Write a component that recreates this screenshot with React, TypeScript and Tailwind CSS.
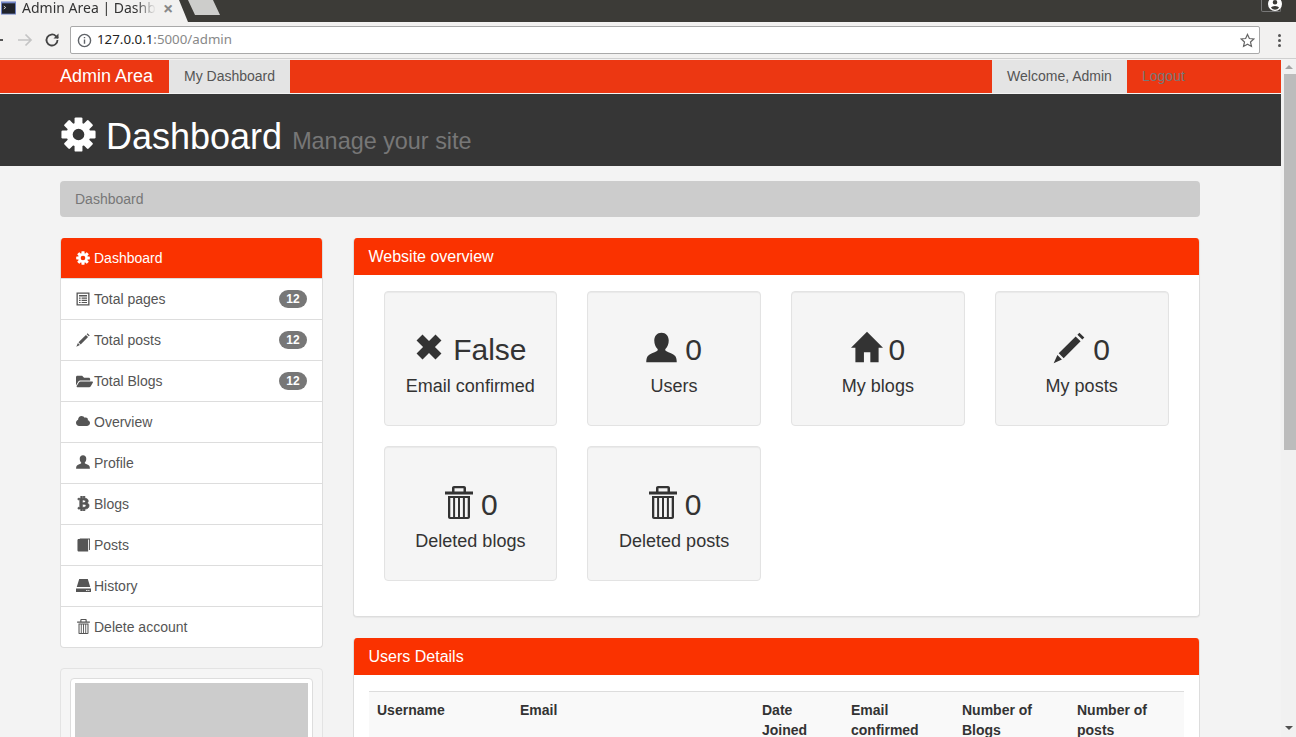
import React from 'react';
import { FaBtc, FaCloud, FaFolderOpen } from 'react-icons/fa';

type IconProps = { className?: string };

const CogIcon = ({ className }: IconProps) => (
  <svg viewBox="0 0 24 24" fill="currentColor" className={className}>
    {[0, 45, 90, 135, 180, 225, 270, 315].map(angle => (
      <rect key={angle} x="9.300" y="0.300" width="5.400" height="6" rx="0.800" transform={`rotate(${angle} 12 12)`} />
    ))}
    <path fillRule="evenodd" d="M12 3.800a8.200 8.200 0 1 1 0 16.400 8.200 8.200 0 0 1 0-16.400zm0 4.200a4 4 0 1 0 0 8 4 4 0 0 0 0-8z" />
  </svg>
);

const UserIcon = ({ className }: IconProps) => (
  <svg viewBox="0 0 24 24" fill="currentColor" className={className}>
    <path d="M12 .5c3.400 0 5.600 2.600 5.600 6 0 2.800-1 5-2.400 6.400-.5.500-.4 1.400.3 1.800 2.300 1.200 5.600 2.200 7.100 3.800.9 1 1.200 3 1.200 5H.2c0-2 .3-4 1.200-5 1.500-1.600 4.800-2.600 7.100-3.800.7-.4.8-1.300.3-1.800C7.400 11.500 6.400 9.300 6.400 6.500c0-3.400 2.200-6 5.600-6z" />
  </svg>
);

const CrossIcon = ({ className }: IconProps) => (
  <svg viewBox="0 0 24 24" fill="currentColor" className={className}>
    <path d="M6 .5 12 6.500 18 .5 23.500 6l-6 6 6 6-5.500 5.500-6-6-6 6L.5 18l6-6-6-6z" />
  </svg>
);

const HomeIcon = ({ className }: IconProps) => (
  <svg viewBox="0 0 24 24" fill="currentColor" className={className}>
    <path d="M12 .5 24 12.500h-3.300V23.500h-6.200v-7.500H9.700v7.500H3.300V12.500H0z" />
  </svg>
);

const PencilIcon = ({ className }: IconProps) => (
  <svg viewBox="0 0 24 24" fill="currentColor" className={className}>
    <path d="M19.800.5 23.500 4.200l-1.500 1.500-3.700-3.700zM17 3.300l3.700 3.700L8 19.700 4.300 16zM3.300 17.300l3.400 3.400-6.200 2.800z" />
  </svg>
);

const TrashIcon = ({ className }: IconProps) => (
  <svg viewBox="0 0 28 33" fill="currentColor" className={className}>
    <path fillRule="evenodd" d="M9 0h10c1.100 0 2 .9 2 2v3.500h7V8.500H0v-3h7V2c0-1.100.9-2 2-2zm.5 2.200v3.300h9V2.200z" />
    <path fillRule="evenodd" d="M3 10h22v21c0 1.100-.9 2-2 2H5c-1.100 0-2-.9-2-2zm2.300 2v19h2.800V12zm4.800 0v19h2.900V12zm4.900 0v19h2.900V12zm4.900 0v19h2.800V12z" />
  </svg>
);

const ListAltIcon = ({ className }: IconProps) => (
  <svg viewBox="0 0 14 14" fill="currentColor" className={className}>
    <path fillRule="evenodd" d="M.5.5h13v13H.5zm1.300 1.300v10.400h10.400V1.800zM3 3h8v1.400H3zm0 2.500h1.600v1.200H3zm2.600 0H11v1.200H5.600zM3 7.700h1.600v1.200H3zm2.600 0H11v1.200H5.600zM3 9.900h1.600v1.200H3zm2.600 0H11v1.200H5.600z" />
  </svg>
);

const BookIcon = ({ className }: IconProps) => (
  <svg viewBox="0 0 14 14" fill="currentColor" className={className}>
    <path d="M3 0h11v12.500h-1V1H3zM.5 1.800C.5 1 1.200.5 2 .5h10v13.500H2c-.8 0-1.500-.5-1.500-1.300z" />
  </svg>
);

const HddIcon = ({ className }: IconProps) => (
  <svg viewBox="0 0 14 14" fill="currentColor" className={className}>
    <path fillRule="evenodd" d="M3 1h8l2.300 7.500H.7zM0 9.800h14V13H0zm9.500 1.300v1h1.200v-1zm2 0v1h1v-1z" />
  </svg>
);

const InfoIcon = () => (
  <svg viewBox="0 0 16 16" className="h-[15px] w-[15px] text-[#5f6368]" fill="none" stroke="currentColor" strokeWidth="1.500">
    <circle cx="8" cy="8" r="6.500" />
    <path d="M8 7v4.500M8 4.200v1.500" />
  </svg>
);

const navItems: { label: string; icon: React.ReactNode; badge?: string }[] = [
  { label: 'Total pages', icon: <ListAltIcon className="h-[14px] w-[14px]" />, badge: '12' },
  { label: 'Total posts', icon: <PencilIcon className="h-[14px] w-[14px]" />, badge: '12' },
  { label: 'Total Blogs', icon: <FaFolderOpen className="h-[17px] w-[17px]" />, badge: '12' },
  { label: 'Overview', icon: <FaCloud className="mb-[3px] h-[14px] w-[14px]" /> },
  { label: 'Profile', icon: <UserIcon className="mb-[2px] h-[14px] w-[14px]" /> },
  { label: 'Blogs', icon: <FaBtc className="mb-[1px] h-[15px] w-[15px]" stroke="currentColor" strokeWidth={28} /> },
  { label: 'Posts', icon: <BookIcon className="mb-[1px] ml-[1px] h-[14px] w-[13px]" /> },
  { label: 'History', icon: <HddIcon className="mb-[1px] h-[15px] w-[15px]" /> },
  { label: 'Delete account', icon: <TrashIcon className="mb-[2px] ml-[1px] h-[15px] w-[13px]" /> },
];

const stats = [
  { icon: <CrossIcon className="mb-[5px] ml-[2px] h-[26px] w-[26px]" />, value: 'False', label: 'Email confirmed', gap: 'gap-[11px]' },
  { icon: <UserIcon className="mb-[4px] h-[31px] w-[31px]" />, value: '0', label: 'Users', gap: 'gap-[8px]' },
  { icon: <HomeIcon className="mb-[5px] h-[32px] w-[32px]" />, value: '0', label: 'My blogs', gap: 'gap-[6px]' },
  { icon: <PencilIcon className="mb-[4px] h-[32px] w-[32px]" />, value: '0', label: 'My posts', gap: 'gap-[8px]' },
  { icon: <TrashIcon className="mb-[4px] ml-[2px] h-[33px] w-[28px]" />, value: '0', label: 'Deleted blogs', gap: 'gap-[8px]' },
  { icon: <TrashIcon className="mb-[4px] ml-[2px] h-[33px] w-[28px]" />, value: '0', label: 'Deleted posts', gap: 'gap-[8px]' },
];

const BrowserChrome = () => (
  <div className="h-[60px] shrink-0 font-['Noto_Sans',sans-serif]">
    <div className="flex h-[22px] items-start bg-[#3c3b37]">
      <div className="flex h-[22px] w-[179px] shrink-0 items-center bg-[#f2f1f0] pb-[6px]">
        <svg viewBox="0 0 16 14" className="ml-[1px] h-[14px] w-[15px] shrink-0">
          <rect width="16" height="14" fill="#7387c9" />
          <rect x="1" y="2" width="14" height="11" fill="#20232b" />
          <path d="M3 5l2 1.500L3 8" stroke="#ddd" fill="none" />
        </svg>
        <span className="ml-[6px] w-[134px] shrink-0 overflow-hidden whitespace-nowrap text-[14px] leading-[16px] text-[#333] [mask-image:linear-gradient(to_right,black_85%,transparent)]">
          Admin Area | Dashboard
        </span>
        <span className="ml-[7px] text-[18px] font-bold leading-[16px] text-[#888]">×</span>
      </div>
      <svg viewBox="0 0 44 22" className="h-[22px] w-[44px] shrink-0">
        <path d="M0 0l9 22H0z" fill="#f2f1f0" />
        <path d="M9 0h25l7 15H16z" fill="#cdcdcb" />
      </svg>
      <div className="ml-auto mr-[15px] flex h-[12px] w-[20px] items-start justify-end rounded-b-[2px] border border-t-0 border-[#777]">
        <svg viewBox="0 0 14 14" className="-mr-[2px] -mt-[3px] h-[14px] w-[14px] text-white" fill="currentColor">
          <path fillRule="evenodd" d="M7 0a7 7 0 1 1 0 14A7 7 0 0 1 7 0zm0 3a2.300 2.300 0 1 0 0 4.600A2.300 2.300 0 0 0 7 3zm0 6c-2 0-3.500.8-4 1.800a5.200 5.200 0 0 0 8 0C10.500 9.800 9 9 7 9z" />
        </svg>
      </div>
    </div>
    <div className="flex h-[37px] items-center border-b border-[#cfcfcf] bg-[#f2f1f0]">
      <div className="flex w-[70px] items-center">
        <span className="h-[2px] w-[3px] bg-[#555]" />
        <svg viewBox="0 0 16 16" className="ml-[14px] h-[16px] w-[16px] text-[#c4c4c4]" fill="none" stroke="currentColor" strokeWidth="1.700">
          <path d="M1 8h13M8.500 2.500 14 8l-5.500 5.500" />
        </svg>
        <svg viewBox="0 0 16 16" className="ml-[11px] h-[16px] w-[16px] text-[#444]" fill="none" stroke="currentColor" strokeWidth="1.800">
          <path d="M13.500 8a5.500 5.500 0 1 1-1.600-3.900L14 6" />
          <path d="M14.500 1.500v5h-5z" fill="currentColor" stroke="none" />
        </svg>
      </div>
      <div className="flex h-[28px] w-[1190px] items-center rounded-[2px] border border-[#a9a9a9] bg-white pl-[6px] pr-[4px]">
        <InfoIcon />
        <span className="ml-[5px] text-[13.300px] text-[#222]">127.0.0.1<span className="text-[#888]">:5000/admin</span></span>
        <svg viewBox="0 0 16 16" className="ml-auto h-[15px] w-[15px] text-[#666]" fill="none" stroke="currentColor" strokeWidth="1.300">
          <path d="M8 1.500l2 4.400 4.700.5-3.500 3.200 1 4.700L8 11.900l-4.200 2.400 1-4.700L1.300 6.400 6 5.900z" />
        </svg>
      </div>
      <div className="ml-[18px] flex flex-col gap-[2px]">
        <span className="h-[3px] w-[3px] rounded-full bg-[#555]" />
        <span className="h-[3px] w-[3px] rounded-full bg-[#555]" />
        <span className="h-[3px] w-[3px] rounded-full bg-[#555]" />
      </div>
    </div>
  </div>
);

const Scrollbar = () => (
  <div className="flex w-[15px] shrink-0 flex-col items-end bg-[#f1f1f1]">
    <span className="mr-[3px] mt-[5px] h-0 w-0 border-x-[4px] border-b-[4px] border-x-transparent border-b-[#a3a3a3]" />
    <span className="mt-[5px] h-[376px] w-[12px] bg-[#bcbcbc]" />
    <span className="mr-[3px] mt-[276px] h-0 w-0 border-x-[4px] border-t-[4px] border-x-transparent border-t-[#505050]" />
  </div>
);

export default function App() {
  return (
    <div className="flex h-[737px] w-[1296px] flex-col overflow-hidden bg-[#f3f3f3]">
      <BrowserChrome />
      <div className="flex min-h-0 flex-1 font-['Liberation_Sans',sans-serif] text-[14px] leading-[20px] text-[#333]">
        <div className="w-[1281px] shrink-0">
          <nav className="flex h-[33px] items-stretch bg-[#ec3712] pl-[60px]">
            <span className="flex w-[109px] items-center pb-[2px] text-[18px] text-white">Admin Area</span>
            <span className="flex w-[121px] items-center justify-center bg-[#e4e4e4] pb-[2px] text-[#555]">My Dashboard</span>
            <span className="ml-auto flex w-[135px] items-center justify-center bg-[#e4e4e4] pb-[2px] text-[#555]">Welcome, Admin</span>
            <span className="flex w-[154px] items-center pb-[2px] pl-[15px] text-[#777]">Logout</span>
          </nav>
          <header className="mt-[1px] h-[72px] w-[1282px] bg-[#363636] pl-[60px] pt-[23px]">
            <h1 className="flex items-baseline text-[36px] leading-[40px] text-white">
              <CogIcon className="mb-[10px] ml-[1px] mr-[10px] h-[35px] w-[35px] self-center" />
              <span>Dashboard</span>
              <small className="ml-[10px] text-[23.400px] text-[#777]">Manage your site</small>
            </h1>
          </header>

          <div className="mx-[60px] mt-[15px] w-[1140px]">
            <div className="flex h-[36px] items-center rounded-[4px] bg-[#cccccc] px-[15px] text-[#777]">Dashboard</div>

            <div className="mt-[21px] flex items-start justify-between">
              <aside className="w-[263px] shrink-0">
                <div className="overflow-hidden rounded-[4px] border border-[#ddd] border-t-0 bg-white text-[#555]">
                  <div className="flex h-[41px] items-center border-b border-[#ddd] bg-[#fa3200] pl-[15px] text-white">
                    <span className="flex w-[18px]"><CogIcon className="mb-[1px] h-[14px] w-[14px]" /></span>
                    Dashboard
                  </div>
                  {navItems.map((item, i) => (
                    <div key={item.label} className={`flex items-center px-[15px] ${i < navItems.length - 1 ? 'h-[41px] border-b border-[#ddd]' : 'h-[40px]'}`}>
                      <span className="flex w-[18px] shrink-0 items-center">{item.icon}</span>
                      {item.label}
                      {item.badge && (
                        <span className="ml-auto flex h-[18px] w-[28px] items-center justify-center rounded-[10px] bg-[#777] text-[12px] font-bold leading-none text-white">{item.badge}</span>
                      )}
                    </div>
                  ))}
                </div>
                <div className="mt-[20px] rounded-[4px] border border-[#e3e3e3] bg-[#f5f5f5] p-[9px]">
                  <div className="rounded-[4px] border border-[#ddd] bg-white p-[4px]">
                    <div className="h-[200px] bg-[#cccccc]" />
                  </div>
                </div>
              </aside>

              <main className="w-[847px] shrink-0">
                <section className="overflow-hidden rounded-[4px] border border-[#ddd] border-t-0 bg-white shadow-[0_1px_1px_rgba(0,0,0,0.05)]">
                  <h3 className="flex h-[37px] items-center bg-[#fa3200] px-[14.500px] text-[16px] text-white">Website overview</h3>
                  <div className="grid h-[341px] grid-cols-[repeat(4,203.750px)] content-start gap-y-[20px] pl-[14.500px] pt-[16px]">
                    {stats.map(stat => (
                      <div key={stat.label} className="mx-[15px] flex h-[135px] flex-col items-center rounded-[4px] border border-[#e3e3e3] bg-[#f5f5f5] pt-[41px] shadow-[inset_0_1px_1px_rgba(0,0,0,0.05)]">
                        <div className={`flex h-[33px] items-center text-[30px] leading-[33px] ${stat.gap}`}>
                          {stat.icon}
                          <span>{stat.value}</span>
                        </div>
                        <div className="mt-[10px] text-[18px] leading-[20px]">{stat.label}</div>
                      </div>
                    ))}
                  </div>
                </section>

                <section className="mt-[21px] overflow-hidden rounded-[4px] border border-[#ddd] border-t-0 bg-white">
                  <h3 className="flex h-[37px] items-center bg-[#fa3200] px-[14.500px] text-[16px] text-white">Users Details</h3>
                  <div className="px-[15px] pt-[16px]">
                    <table className="w-[815px] table-fixed border-t border-[#ddd] bg-[#f9f9f9] text-left font-bold">
                      <thead>
                        <tr>
                          <th className="w-[143px] p-[8px] align-top">Username</th>
                          <th className="w-[242px] p-[8px] align-top">Email</th>
                          <th className="w-[89px] p-[8px] align-top">Date Joined</th>
                          <th className="w-[111px] p-[8px] align-top">Email confirmed</th>
                          <th className="w-[115px] p-[8px] align-top">Number of Blogs</th>
                          <th className="w-[115px] p-[8px] align-top">Number of posts</th>
                        </tr>
                      </thead>
                    </table>
                  </div>
                </section>
              </main>
            </div>
          </div>
        </div>
        <Scrollbar />
      </div>
    </div>
  );
}
